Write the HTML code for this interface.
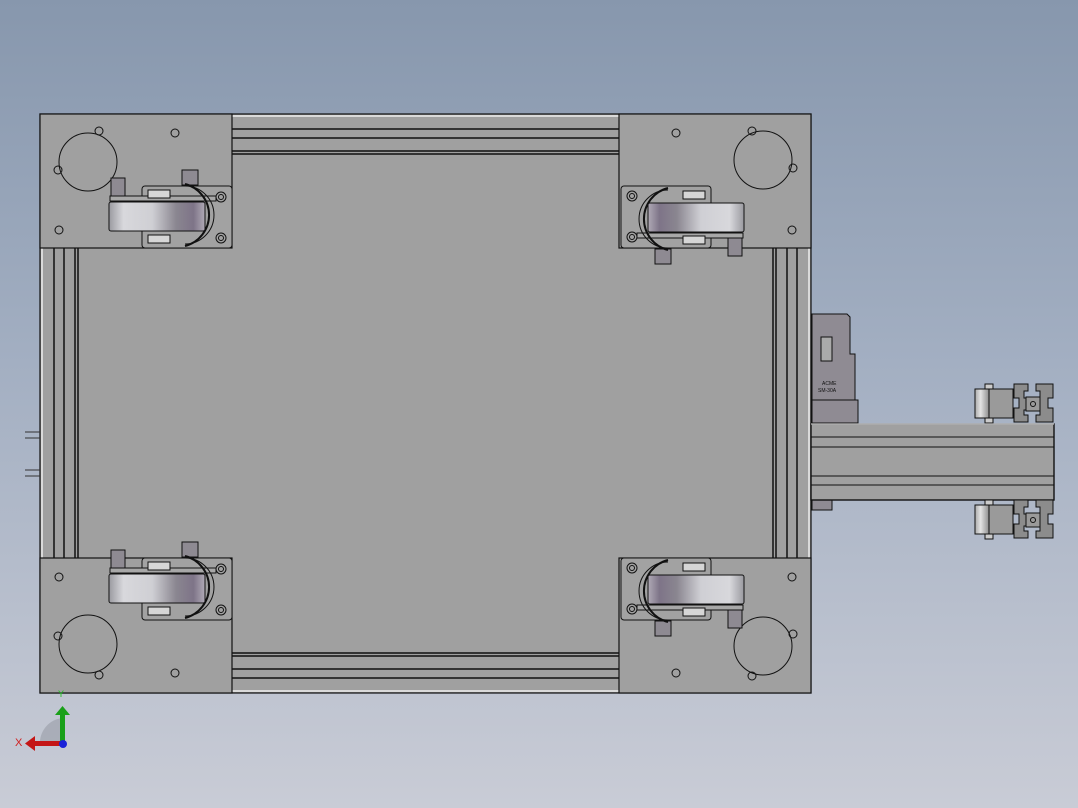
<!DOCTYPE html>
<html><head><meta charset="utf-8"><style>
html,body{margin:0;padding:0;width:1078px;height:808px;overflow:hidden}
body{background:linear-gradient(#8797ad 0%,#a3afc2 45%,#c9ccd6 100%)}
svg{display:block}
</style></head><body>
<svg width="1078" height="808" viewBox="0 0 1078 808" xmlns="http://www.w3.org/2000/svg" font-family="Liberation Sans, sans-serif">
<defs>
<linearGradient id="wh" x1="0" x2="1" y1="0" y2="0">
<stop offset="0" stop-color="#9a9aa0"/><stop offset="0.15" stop-color="#d8d8dc"/><stop offset="0.45" stop-color="#cfcfd4"/><stop offset="0.7" stop-color="#8a8690"/><stop offset="0.88" stop-color="#7e7488"/><stop offset="1" stop-color="#b0aab6"/></linearGradient>
<linearGradient id="rl" x1="0" x2="1"><stop offset="0" stop-color="#aaa"/><stop offset="0.4" stop-color="#e4e4e4"/><stop offset="1" stop-color="#8e8e8e"/></linearGradient>
<g id="caster" stroke="#111" stroke-width="1">
<rect x="142" y="186" width="90" height="62" rx="3" fill="#a2a2a2"/>
<circle cx="221" cy="197" r="5" fill="none"/><circle cx="221" cy="197" r="2.5" fill="none"/>
<circle cx="221" cy="238" r="5" fill="none"/><circle cx="221" cy="238" r="2.5" fill="none"/>
<rect x="111" y="178" width="14" height="19" fill="#8e8a92"/>
<rect x="182" y="170" width="16" height="15" fill="#8e8a92"/>
<rect x="110" y="196" width="106" height="5" fill="#a8a8a8"/>
<path d="M185 184 A32 32 0 0 1 185 246" fill="none" stroke-width="2"/>
<path d="M185 186 A29 29 0 0 1 185 244" fill="none"/>
<rect x="148" y="190" width="22" height="8" fill="#d6d6d6"/>
<rect x="148" y="235" width="22" height="8" fill="#d6d6d6"/>
<rect x="109" y="202" width="96" height="29" rx="2" fill="url(#wh)"/>
</g>
</defs>
<!-- main frame -->
<rect x="40" y="114" width="771" height="579" fill="#a0a0a0" stroke="#111" stroke-width="1.2"/>
<!-- top rail -->
<g stroke="#111" stroke-width="1.5" fill="none">
<line x1="232" y1="129" x2="619" y2="129"/><line x1="232" y1="138" x2="619" y2="138"/>
<line x1="232" y1="151" x2="619" y2="151"/><line x1="232" y1="154" x2="619" y2="154"/>
<line x1="232" y1="116" x2="619" y2="116" stroke="#eee"/>
<line x1="232" y1="653" x2="619" y2="653"/><line x1="232" y1="656" x2="619" y2="656"/>
<line x1="232" y1="669" x2="619" y2="669"/><line x1="232" y1="678" x2="619" y2="678"/>
<line x1="232" y1="691" x2="619" y2="691" stroke="#eee"/>
<line x1="42" y1="248" x2="42" y2="558" stroke="#eee"/>
<line x1="54" y1="248" x2="54" y2="558"/><line x1="64" y1="248" x2="64" y2="558"/>
<line x1="75" y1="248" x2="75" y2="558"/><line x1="78" y1="248" x2="78" y2="558"/>
<line x1="773" y1="248" x2="773" y2="558"/><line x1="776" y1="248" x2="776" y2="558"/>
<line x1="787" y1="248" x2="787" y2="558"/><line x1="797" y1="248" x2="797" y2="558"/>
<line x1="809" y1="248" x2="809" y2="558" stroke="#eee"/>
</g>
<!-- corner plates -->
<g stroke="#111" stroke-width="1.2" fill="#a0a0a0">
<rect x="40" y="114" width="192" height="134"/><rect x="619" y="114" width="192" height="134"/>
<rect x="40" y="558" width="192" height="135"/><rect x="619" y="558" width="192" height="135"/>
</g>
<g stroke="#111" stroke-width="1" fill="none">
<circle cx="88" cy="162" r="29"/><circle cx="99" cy="131" r="4"/><circle cx="58" cy="170" r="4"/><circle cx="175" cy="133" r="4"/><circle cx="59" cy="230" r="4"/>
<circle cx="763" cy="160" r="29"/><circle cx="752" cy="131" r="4"/><circle cx="793" cy="168" r="4"/><circle cx="676" cy="133" r="4"/><circle cx="792" cy="230" r="4"/>
<circle cx="88" cy="644" r="29"/><circle cx="99" cy="675" r="4"/><circle cx="58" cy="636" r="4"/><circle cx="175" cy="673" r="4"/><circle cx="59" cy="577" r="4"/>
<circle cx="763" cy="646" r="29"/><circle cx="752" cy="676" r="4"/><circle cx="793" cy="634" r="4"/><circle cx="676" cy="673" r="4"/><circle cx="792" cy="577" r="4"/>
</g>
<use href="#caster"/>
<use href="#caster" transform="translate(853,434) rotate(180)"/>
<use href="#caster" transform="translate(0,372)"/>
<use href="#caster" transform="translate(853,806) rotate(180)"/>
<!-- left marks -->
<g stroke="#333" stroke-width="1"><line x1="25" y1="432" x2="40" y2="432"/><line x1="25" y1="438" x2="40" y2="438"/><line x1="25" y1="470" x2="40" y2="470"/><line x1="25" y1="476" x2="40" y2="476"/></g>
<!-- right mechanism -->
<g stroke="#111" stroke-width="1">
<path d="M812 314 H847 L850 317 V354 H855 V400 H812 Z" fill="#8f8b93"/>
<rect x="821" y="337" width="11" height="24" fill="#aaa"/>
<rect x="812" y="400" width="46" height="23" fill="#8f8b93"/>
<rect x="812" y="500" width="20" height="10" fill="#8f8b93"/>
<rect x="811" y="424" width="243" height="76" fill="#a0a0a0" stroke-width="1.4"/>
<line x1="811" y1="437" x2="1054" y2="437"/><line x1="811" y1="447" x2="1054" y2="447"/>
<line x1="811" y1="476" x2="1054" y2="476"/><line x1="811" y1="485" x2="1054" y2="485"/>
<line x1="811" y1="424" x2="1054" y2="424" stroke="#eee"/>
</g>
<text x="822" y="385" font-size="5" fill="#111">ACME</text><text x="818" y="392" font-size="5" fill="#111">SM-30A</text>
<g id="br" stroke="#111" stroke-width="1">
<rect x="985" y="384" width="8" height="39" fill="#ccc"/>
<rect x="975" y="389" width="14" height="29" fill="url(#rl)"/>
<rect x="989" y="389" width="24" height="29" fill="#9a9a9a"/>
<path d="M1014 384 H1028 V391 H1024 V398 H1040 V391 H1036 V384 H1053 V398 H1048 V408 H1053 V422 H1036 V415 H1040 V410 H1024 V415 H1028 V422 H1014 V408 H1019 V398 H1014 Z" fill="#8c8c8c"/>
<rect x="1026" y="397" width="14" height="14" fill="#9a9a9a"/>
<circle cx="1033" cy="404" r="2.5" fill="none"/>
</g>
<use href="#br" transform="translate(0,116)"/>
<!-- axis -->
<path d="M40 745 A25 25 0 0 1 63 718 V745 Z" fill="#9ea3ad" opacity="0.7"/>
<rect x="60" y="713" width="5" height="32" fill="#19a019"/><path d="M55 715 L62.5 706 L70 715 Z" fill="#19a019"/>
<rect x="33" y="741" width="30" height="5" fill="#c41616"/><path d="M35 736 L25 743.5 L35 751 Z" fill="#c41616"/>
<circle cx="63" cy="744" r="4" fill="#1a22d8"/>
<text x="15" y="746" font-size="11" fill="#d02020">X</text>
<text x="58" y="697" font-size="9" fill="#20c020">Y</text>
</svg>
</body></html>
